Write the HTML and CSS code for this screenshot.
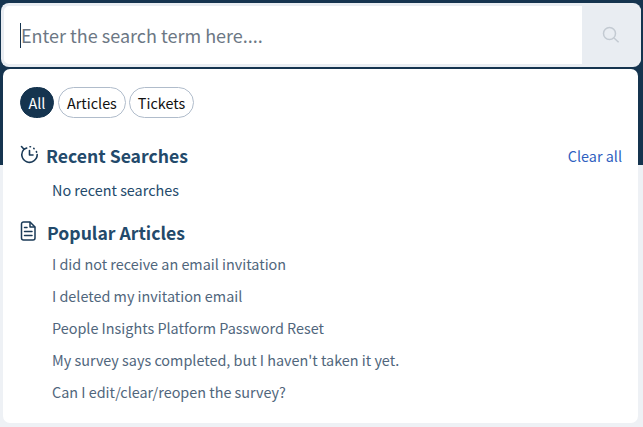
FILE: index.html
```html
<!DOCTYPE html>
<html lang="en">
<head>
  <meta charset="UTF-8">
  <title>Search</title>
  <link rel="stylesheet" href="styles.css">
</head>
<body>

  <div class="search-bar">
    <div class="search-input"><span class="caret"></span><span class="placeholder">Enter the search term here....</span></div>
    <div class="search-btn">
      <svg width="18" height="18" viewBox="0 0 18 18" fill="none" stroke="#c3cad2" stroke-width="1.5">
        <circle cx="7.5" cy="7.5" r="6"/>
        <path d="M12 12l4.600 4.200"/>
      </svg>
    </div>
  </div>

  <div class="panel">
    <div class="filters">
      <span class="pill active">All</span>
      <span class="pill">Articles</span>
      <span class="pill">Tickets</span>
    </div>

    <div class="section-head recent-head">
      <svg class="icon" width="20" height="20" viewBox="0 0 20 20" fill="none" stroke="#1a3a57" stroke-width="1.6" stroke-linecap="round" stroke-linejoin="round">
        <path d="M5 5.200A7.700 7.700 0 1 0 18.200 10.500"/>
        <path d="M2.500 2.500l2.500 2.700 2.700-1.200"/>
        <path d="M11 2.800h.5M14.800 4.400l.3.300M17.400 7.600l.2.500"/>
        <path d="M10.500 6.500v4.500h3.500"/>
      </svg>
      <h3>Recent Searches</h3>
      <a class="clear">Clear all</a>
    </div>
    <p class="empty">No recent searches</p>

    <div class="section-head popular-head">
      <svg class="icon" width="20" height="20" viewBox="0 0 20 20" fill="none" stroke="#1a3a57" stroke-width="1.5" stroke-linecap="round" stroke-linejoin="round">
        <path d="M2.500 3a2 2 0 0 1 2-2h6.500l5 5v11a2 2 0 0 1-2 2h-9.500a2 2 0 0 1-2-2z"/>
        <path d="M11 1.500V6h4.500"/>
        <path d="M5.500 6.500h2.500M5.500 10.500h7.500M5.500 14.500h7.500"/>
      </svg>
      <h3>Popular Articles</h3>
    </div>
    <ul class="articles">
      <li>I did not receive an email invitation</li>
      <li>I deleted my invitation email</li>
      <li>People Insights Platform Password Reset</li>
      <li>My survey says completed, but I haven't taken it yet.</li>
      <li>Can I edit/clear/reopen the survey?</li>
    </ul>
  </div>

</body>
</html>
```

FILE: styles.css
```css
* {
  box-sizing: border-box;
}

html, body {
  height: 100%;
}

body {
  margin: 0;
  padding: 3px 3px 4px 1px;
  overflow: hidden;
  font-family: "Noto Sans CJK SC", "Open Sans", sans-serif;
  background: linear-gradient(#15344f 165px, #eef1f5 165px);
}

.search-bar {
  display: flex;
  height: 64px;
  width: 640px;
  margin-right: -2px;
  border: 3px solid #e9edf2;
  border-right: none;
  border-radius: 8px;
  background: #fff;
  overflow: hidden;
}

.search-input {
  flex: 1;
  display: flex;
  align-items: center;
  padding-left: 16px;
}

.caret {
  width: 1px;
  height: 25px;
  background: #15344f;
}

.placeholder {
  font-size: 18px;
  line-height: 26px;
  color: #6c7784;
}

.search-btn {
  width: 59px;
  margin: -3px 0;
  padding-right: 2px;
  display: flex;
  align-items: center;
  justify-content: center;
  background: #e9edf2;
}

.panel {
  margin: 2px 0 0 2px;
  width: 635px;
  height: 354px;
  padding: 18px 17px 0 17px;
  background: #fff;
  border-radius: 7px;
}

.filters {
  display: flex;
  gap: 3px;
}

.pill {
  height: 31px;
  padding: 0 8px;
  display: flex;
  align-items: center;
  font-size: 14.4px;
  line-height: 20px;
  color: #111;
  background: #fff;
  border: 1px solid #b0bccb;
  border-radius: 16px;
}

.pill.active {
  width: 34px;
  margin-right: 1px;
  justify-content: center;
  padding: 0;
  color: #fff;
  background: #15344f;
  border-color: #15344f;
}

.section-head {
  display: flex;
  align-items: flex-start;
  height: 26px;
}

.recent-head {
  margin-top: 25px;
}

.popular-head {
  margin-top: 20px;
}

.icon {
  flex: none;
  margin-top: 1px;
  margin-left: -1px;
}

.section-head h3 {
  margin: 0 0 0 7px;
  font-size: 17.6px;
  line-height: 26px;
  font-weight: 700;
  color: #234a6b;
}

.popular-head h3 {
  margin-left: 8px;
}

.clear {
  margin-left: auto;
  margin-top: 3px;
  margin-right: -1px;
  font-size: 14.4px;
  line-height: 20px;
  color: #2f5fc0;
}

.empty {
  margin: 11px 0 0 32px;
  font-size: 14.4px;
  line-height: 20px;
  color: #234a6b;
}

.articles {
  list-style: none;
  margin: 8px 0 0 32px;
  padding: 0;
}

.articles li {
  height: 32px;
  font-size: 14.4px;
  line-height: 20px;
  color: #50667c;
}
```
